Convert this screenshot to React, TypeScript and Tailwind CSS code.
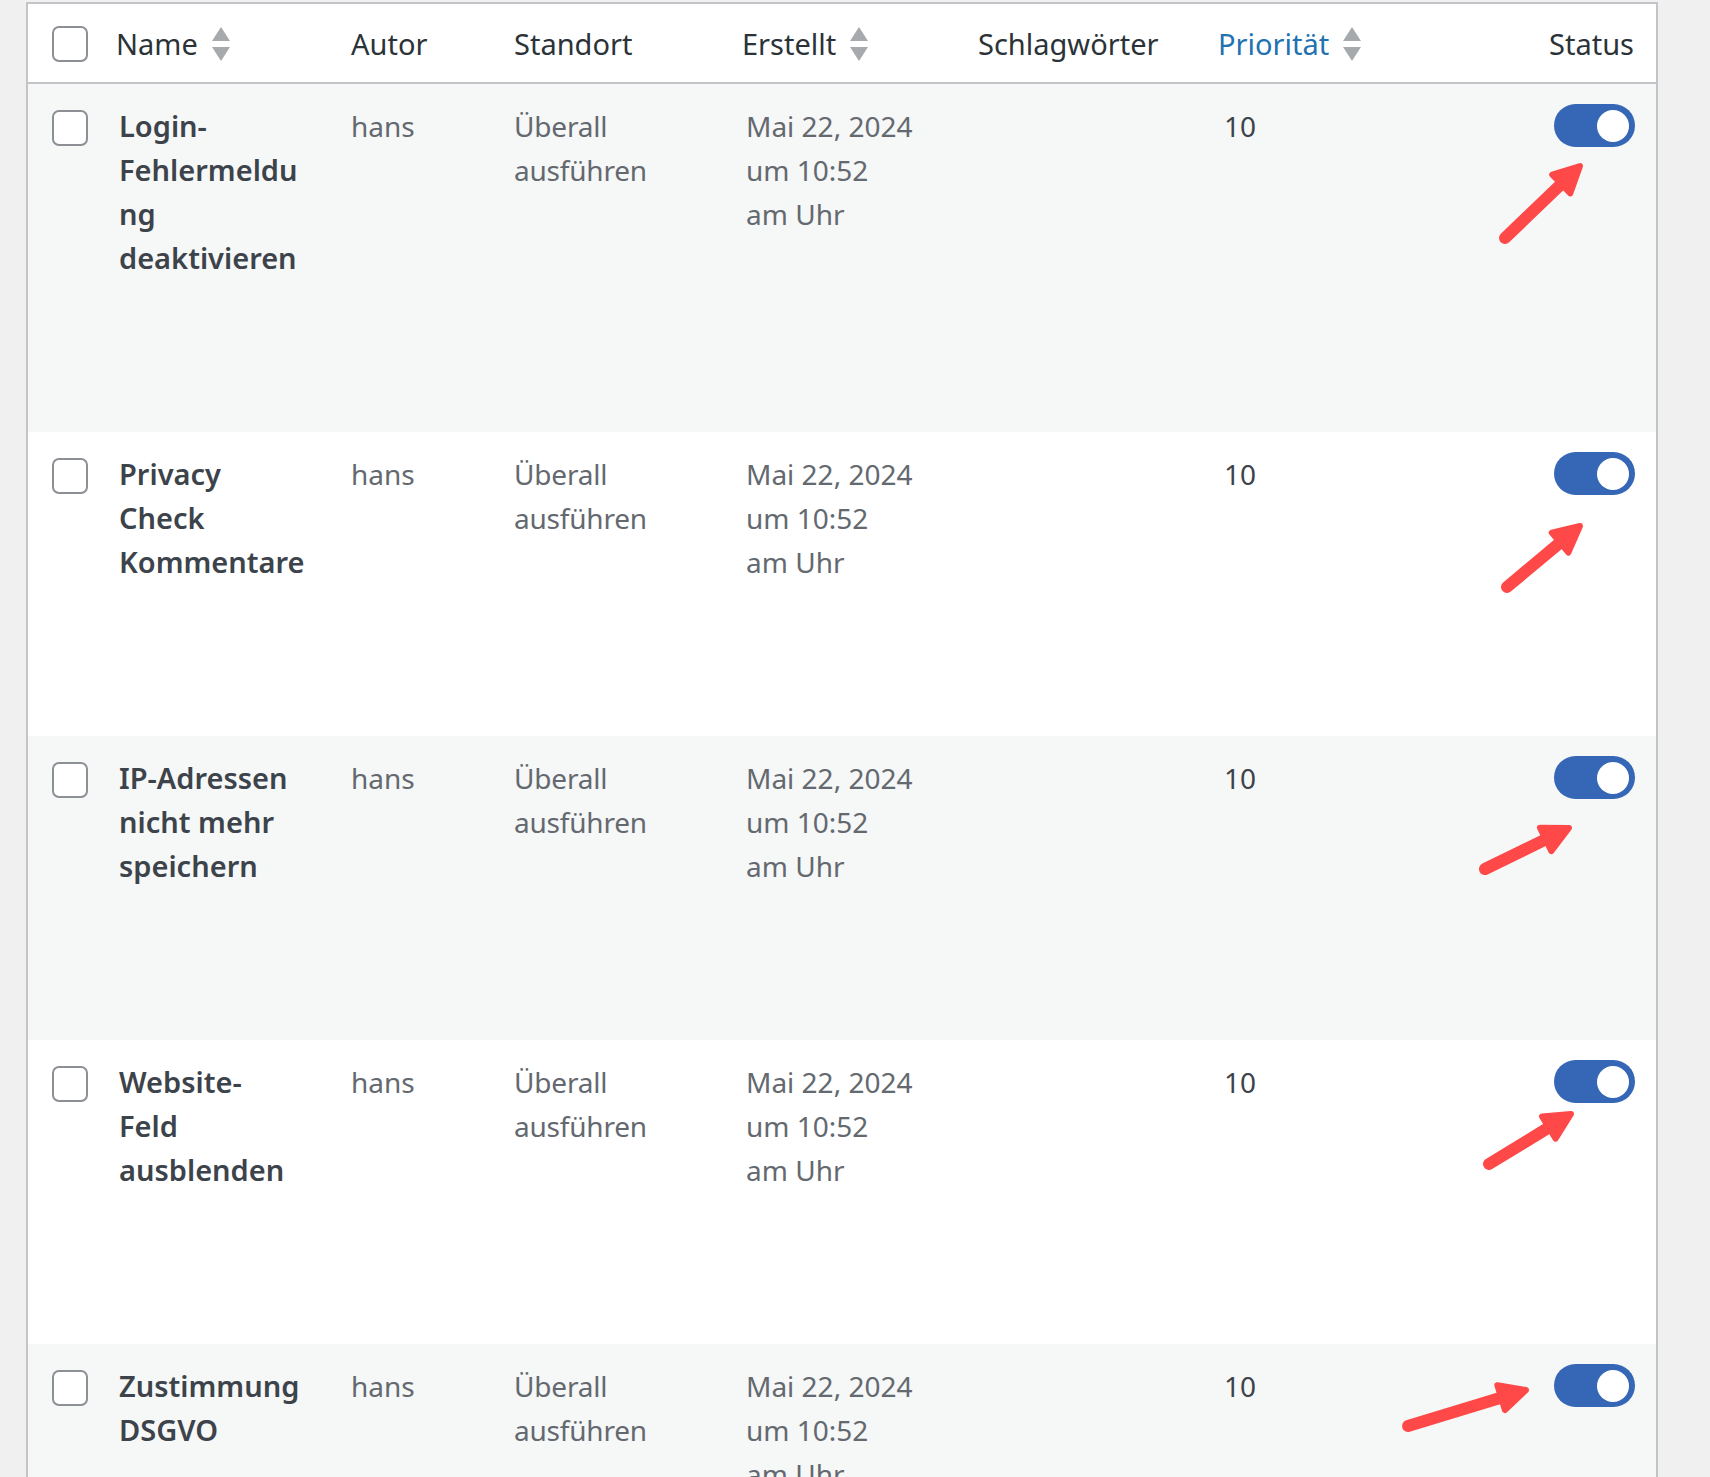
import React from 'react';

type Row = {
  title: string[];
  bg: string;
};

const rows: Row[] = [
  { title: ['Login-', 'Fehlermeldu', 'ng', 'deaktivieren'], bg: 'bg-[#f6f7f7]' },
  { title: ['Privacy', 'Check', 'Kommentare'], bg: 'bg-white' },
  { title: ['IP-Adressen', 'nicht mehr', 'speichern'], bg: 'bg-[#f6f7f7]' },
  { title: ['Website-', 'Feld', 'ausblenden'], bg: 'bg-white' },
  { title: ['Zustimmung', 'DSGVO'], bg: 'bg-[#f6f7f7]' },
];

// annotation arrows, page coordinates: [tailX, tailY, tipX, tipY]
const arrows: [number, number, number, number][] = [
  [1505, 238, 1580, 166],
  [1507, 587, 1580, 526],
  [1485, 869, 1569, 828],
  [1489, 1164, 1571, 1114],
  [1408, 1426, 1526, 1390],
];

function SortIcon() {
  return (
    <svg width="20" height="36" viewBox="0 0 20 36" className="ml-[13px] shrink-0">
      <path d="M10 1 L19 15 L1 15 Z" fill="#a7aaad" />
      <path d="M1 21 L19 21 L10 35 Z" fill="#a7aaad" />
    </svg>
  );
}

function Checkbox() {
  return <div className="w-[36px] h-[36px] rounded-[7px] border-2 border-[#8c8f94] bg-white shrink-0" />;
}

function Toggle() {
  return (
    <div className="w-[81px] h-[43px] rounded-full bg-[#3567b6] flex items-center justify-end pr-[6px]">
      <div className="w-[32px] h-[32px] rounded-full bg-white" />
    </div>
  );
}

function Arrow({ a }: { a: [number, number, number, number] }) {
  const [x1, y1, x2, y2] = a;
  const dx = x2 - x1;
  const dy = y2 - y1;
  const len = Math.hypot(dx, dy);
  const ux = dx / len;
  const uy = dy / len;
  const head = 26;
  const half = 13;
  const bx = x2 - ux * head;
  const by = y2 - uy * head;
  const p1 = `${bx - uy * half},${by + ux * half}`;
  const p2 = `${bx + uy * half},${by - ux * half}`;
  return (
    <g>
      <line x1={x1} y1={y1} x2={bx + ux * 4} y2={by + uy * 4} stroke="#ff4848" strokeWidth="12" strokeLinecap="round" />
      <polygon points={`${x2},${y2} ${p1} ${p2}`} fill="#ff4848" stroke="#ff4848" strokeWidth="6" strokeLinejoin="round" />
    </g>
  );
}

export default function App() {
  return (
    <div className="relative w-[1710px] h-[1477px] overflow-hidden bg-[#f0f0f1] font-['Noto_Sans',sans-serif]">
      <div className="ml-[26px] mt-[2px] w-[1632px] border-2 border-b-0 border-[#c3c4c7] bg-white">
        {/* Header */}
        <div className="flex items-center h-[80px] pt-[2px] border-b-2 border-[#c3c4c7] text-[29px] text-[#2c3338]">
          <div className="w-[88px] pl-[24px] flex items-center">
            <Checkbox />
          </div>
          <div className="w-[235px] flex items-center">
            <span>Name</span>
            <SortIcon />
          </div>
          <div className="w-[163px]">Autor</div>
          <div className="w-[228px]">Standort</div>
          <div className="w-[236px] flex items-center">
            <span>Erstellt</span>
            <SortIcon />
          </div>
          <div className="w-[240px]">Schlagwörter</div>
          <div className="w-[200px] flex items-center text-[#2271b1]">
            <span>Priorität</span>
            <SortIcon />
          </div>
          <div className="flex-1 text-right pr-[22px]">Status</div>
        </div>

        {/* Rows */}
        {rows.map((r, i) => (
          <div key={i} className={`flex items-start pt-[20px] text-[28px] leading-[44px] ${r.bg}`}>
            <div className="w-[88px] pl-[24px] pt-[6px]">
              <Checkbox />
            </div>
            <div className="w-[235px] pl-[3px] pb-[152px] text-[29px] font-semibold text-[#3c434a]">
              {r.title.map((t) => (
                <div key={t}>{t}</div>
              ))}
            </div>
            <div className="w-[163px] text-[#646970]">hans</div>
            <div className="w-[228px] text-[#646970] tracking-[-0.2px]">
              <div>Überall</div>
              <div>ausführen</div>
            </div>
            <div className="w-[236px] pl-[4px] text-[#646970]">
              <div>Mai 22, 2024</div>
              <div>um 10:52</div>
              <div>am Uhr</div>
            </div>
            <div className="w-[240px]" />
            <div className="w-[200px] pl-[6px] text-[#3c434a]">10</div>
            <div className="flex-1 flex justify-end pr-[21px]">
              <Toggle />
            </div>
          </div>
        ))}
      </div>

      <svg className="absolute inset-0 pointer-events-none" width="1710" height="1477" viewBox="0 0 1710 1477">
        {arrows.map((a, i) => (
          <Arrow key={i} a={a} />
        ))}
      </svg>
    </div>
  );
}
